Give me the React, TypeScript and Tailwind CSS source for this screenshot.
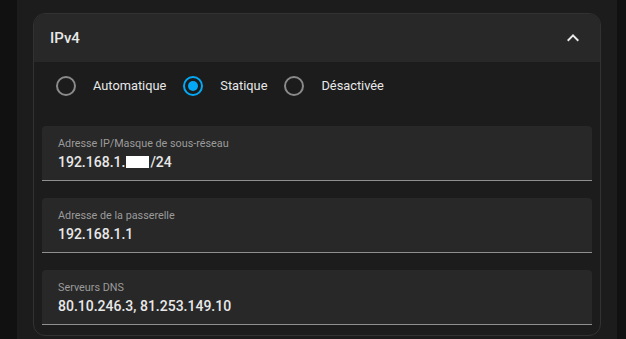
import React from 'react';

const Radio = ({ checked }: { checked?: boolean }) => (
  <span
    className={
      'flex h-5 w-5 shrink-0 items-center justify-center rounded-full border-2 ' +
      (checked ? 'border-[#03a9f4]' : 'border-[#8a8a8a]')
    }
  >
    {checked && <span className="h-[10px] w-[10px] rounded-full bg-[#03a9f4]" />}
  </span>
);

const Field = ({ label, children }: { label: string; children: React.ReactNode }) => (
  <div className="h-[55px] rounded-t-[4px] border-b border-[#8f8f8f] bg-[#282828] pl-4 pt-[10px]">
    <div className="text-[10.8px] leading-4 text-[#9b9b9b]">{label}</div>
    <div className="text-[14px] font-medium leading-5 text-[#e8e8e8]">{children}</div>
  </div>
);

const App = () => {
  const modes = [
    { label: 'Automatique', checked: false },
    { label: 'Statique', checked: true },
    { label: 'Désactivée', checked: false },
  ];

  return (
    <div
      className="flex h-[339px] w-full overflow-hidden bg-[#111111]"
      style={{ fontFamily: 'Roboto, "Noto Sans", sans-serif' }}
    >
      <div className="ml-[17px] w-[600px] bg-[#1c1c1c] px-4 pt-[13px]">
        <div className="overflow-hidden rounded-[12px] border border-[#323232]">
          {/* header */}
          <div className="flex h-[48px] items-center justify-between bg-[#282828] pl-4 pr-[15px]">
            <span className="text-[15px] font-medium text-[#e8e8e8]">IPv4</span>
            <svg width="24" height="24" viewBox="0 0 24 24" fill="#e8e8e8">
              <path d="M12 8l-6 6 1.41 1.41L12 10.83l4.59 4.58L18 14z" />
            </svg>
          </div>

          <div className="pb-[10px] pt-[14px]">
            {/* mode */}
            <div className="flex h-5 items-center pl-[22px]">
              {modes.map((m) => (
                <div key={m.label} className="mr-[17px] flex items-center gap-[17px]">
                  <Radio checked={m.checked} />
                  <span className="text-[12.8px] text-[#e8e8e8]">{m.label}</span>
                </div>
              ))}
            </div>

            <div className="mt-[30px] flex flex-col gap-[17px] px-2">
              <Field label="Adresse IP/Masque de sous-réseau">
                <span className="inline-flex items-center">
                  192.168.1.
                  <span className="mx-px inline-block h-[12px] w-[23px] bg-white" />
                  /24
                </span>
              </Field>
              <Field label="Adresse de la passerelle">192.168.1.1</Field>
              <Field label="Serveurs DNS">80.10.246.3, 81.253.149.10</Field>
            </div>
          </div>
        </div>
      </div>
    </div>
  );
};

export default App;
